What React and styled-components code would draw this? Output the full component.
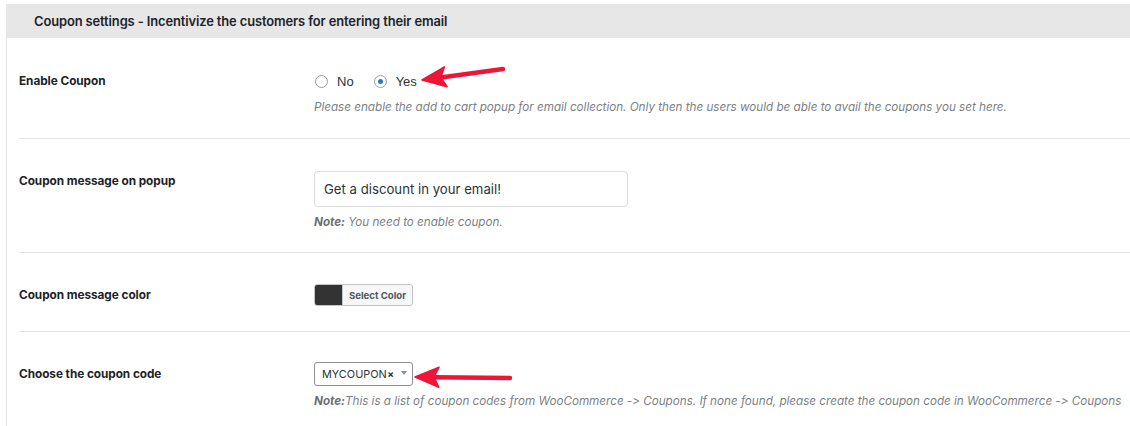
import React from 'react';
import styled, { createGlobalStyle } from 'styled-components';

const GlobalStyle = createGlobalStyle`
  html, body {
    margin: 0;
    padding: 0;
    background: #ffffff;
  }
  body {
    font-family: Inter, "Noto Sans", sans-serif;
    color: #1d2327;
  }
`;

const Page = styled.div`
  position: relative;
  width: 1130px;
  height: 426px;
  overflow: hidden;
  padding-top: 4px;
  box-sizing: border-box;
`;

const Panel = styled.section`
  margin-left: 6px;
  border-left: 1px solid #e2e2e2;
  background: #fff;
`;

const Header = styled.h2`
  margin: 0 0 0 -1px;
  height: 34px;
  display: flex;
  align-items: center;
  padding-left: 28px;
  background: #e7e7e7;
  font-size: 12.9px;
  font-weight: 600;
  color: #1d2327;
  letter-spacing: -0.1px;
`;

const Body = styled.div`
  padding-left: 12px;
`;

const Row = styled.div`
  display: grid;
  grid-template-columns: 295px 1fr;
  padding: 30px 0 ${p => p.$bottom || 22}px;
  border-bottom: ${p => (p.$last ? 'none' : '1px solid #e6e6e6')};
`;

const Label = styled.div`
  padding-top: ${p => p.$pt || 5}px;
  font-size: 11.8px;
  line-height: 14px;
  font-weight: 700;
  color: #1d2327;
  letter-spacing: -0.05px;
`;

const Field = styled.div`
  display: flex;
  flex-direction: column;
  align-items: flex-start;
`;

const RadioGroup = styled.div`
  display: flex;
  align-items: center;
  height: 26px;
  gap: 19px;
`;

const RadioOption = styled.label`
  display: flex;
  align-items: center;
  gap: 9px;
  font-family: "Liberation Sans", Arial, sans-serif;
  font-size: 13px;
  color: #2c3338;
`;

const RadioDot = styled.span`
  width: 11px;
  height: 11px;
  border-radius: 50%;
  border: 1px solid #9a9da1;
  background: #fff;
  display: flex;
  align-items: center;
  justify-content: center;
  margin-left: 1px;

  &::after {
    content: '';
    width: 5px;
    height: 5px;
    border-radius: 50%;
    background: ${p => (p.$checked ? '#2a7cb8' : 'transparent')};
  }
`;

const Help = styled.p`
  margin: ${p => p.$top || 5}px 0 0;
  font-size: 11.7px;
  line-height: 16px;
  font-style: italic;
  color: #7b7f85;
  letter-spacing: -0.02px;

  strong {
    font-weight: 700;
    color: #6b6f74;
  }
`;

const TextInput = styled.div`
  margin-top: 2px;
  width: 314px;
  height: 36px;
  border: 1px solid #dcdcde;
  border-radius: 4px;
  display: flex;
  align-items: center;
  padding-left: 9px;
  box-sizing: border-box;
  font-size: 13.2px;
  color: #2c3338;
`;

const ColorButton = styled.div`
  margin-top: 1px;
  display: flex;
  height: 20px;
  border: 1px solid #c3c4c7;
  border-radius: 3px;
  overflow: hidden;
  background: #f6f7f7;
`;

const Swatch = styled.span`
  width: 27px;
  background: ${p => p.$color};
`;

const ColorText = styled.span`
  display: flex;
  align-items: center;
  padding: 0 6px 0 6px;
  border-left: 1px solid #c3c4c7;
  font-size: 9.6px;
  font-weight: 700;
  color: #50575e;
`;

const Select = styled.div`
  height: 24px;
  width: 99px;
  border: 1px solid #8c8f94;
  border-radius: 3px;
  display: flex;
  align-items: center;
  padding-left: 7px;
  box-sizing: border-box;
  font-size: 10.9px;
  color: #2c3338;
`;

const Clear = styled.span`
  font-size: 10px;
  font-weight: 700;
  margin-left: 0.5px;
`;

const Caret = styled.span`
  margin-left: 7px;
  width: 0;
  height: 0;
  border-left: 3.5px solid transparent;
  border-right: 3.5px solid transparent;
  border-top: 4px solid #8c8f94;
  margin-top: -2px;
`;

const Arrow = styled.svg`
  position: absolute;
  left: 0;
  top: 0;
  pointer-events: none;
`;

const RedArrow = ({ x1, y1, x2, y2 }) => {
  // tail at (x1,y1), tip at (x2,y2)
  const dx = x2 - x1;
  const dy = y2 - y1;
  const len = Math.hypot(dx, dy);
  const ux = dx / len;
  const uy = dy / len;
  const px = -uy;
  const py = ux;
  const back = 24;
  const wing = 10;
  const notch = 19;
  const bx = x2 - ux * back;
  const by = y2 - uy * back;
  const nx = x2 - ux * notch;
  const ny = y2 - uy * notch;
  const pts = [
    [x2, y2],
    [bx + px * wing, by + py * wing],
    [nx, ny],
    [bx - px * wing, by - py * wing],
  ]
    .map(p => p.join(','))
    .join(' ');
  return (
    <g>
      <line x1={x1} y1={y1} x2={nx} y2={ny} stroke="#ee1537" strokeWidth="4.5" strokeLinecap="round" />
      <polygon points={pts} fill="#ee1537" stroke="#ee1537" strokeWidth="1.5" strokeLinejoin="round" />
    </g>
  );
};

export default function App() {
  return (
    <Page>
      <GlobalStyle />
      <Panel>
        <Header>Coupon settings - Incentivize the customers for entering their email</Header>
        <Body>
          <Row $bottom={23}>
            <Label $pt={6}>Enable Coupon</Label>
            <Field>
              <RadioGroup>
                <RadioOption><RadioDot />No</RadioOption>
                <RadioOption><RadioDot $checked />Yes</RadioOption>
              </RadioGroup>
              <Help>
                Please enable the add to cart popup for email collection. Only then the users would be able to avail the coupons you set here.
              </Help>
            </Field>
          </Row>
          <Row>
            <Label>Coupon message on popup</Label>
            <Field>
              <TextInput>Get a discount in your email!</TextInput>
              <Help $top={7}><strong>Note:</strong> You need to enable coupon.</Help>
            </Field>
          </Row>
          <Row $bottom={25}>
            <Label>Coupon message color</Label>
            <Field>
              <ColorButton>
                <Swatch $color="#333333" />
                <ColorText>Select Color</ColorText>
              </ColorButton>
            </Field>
          </Row>
          <Row $last>
            <Label>Choose the coupon code</Label>
            <Field>
              <Select>
                MYCOUPON<Clear>×</Clear>
                <Caret />
              </Select>
              <Help $top={7}>
                <strong>Note:</strong>This is a list of coupon codes from WooCommerce -&gt; Coupons. If none found, please create the coupon code in WooCommerce -&gt; Coupons
              </Help>
            </Field>
          </Row>
        </Body>
      </Panel>
      <Arrow width="1130" height="426" viewBox="0 0 1130 426">
        <RedArrow x1={503} y1={69} x2={422} y2={80} />
        <RedArrow x1={510} y1={378} x2={415} y2={377} />
      </Arrow>
    </Page>
  );
}
